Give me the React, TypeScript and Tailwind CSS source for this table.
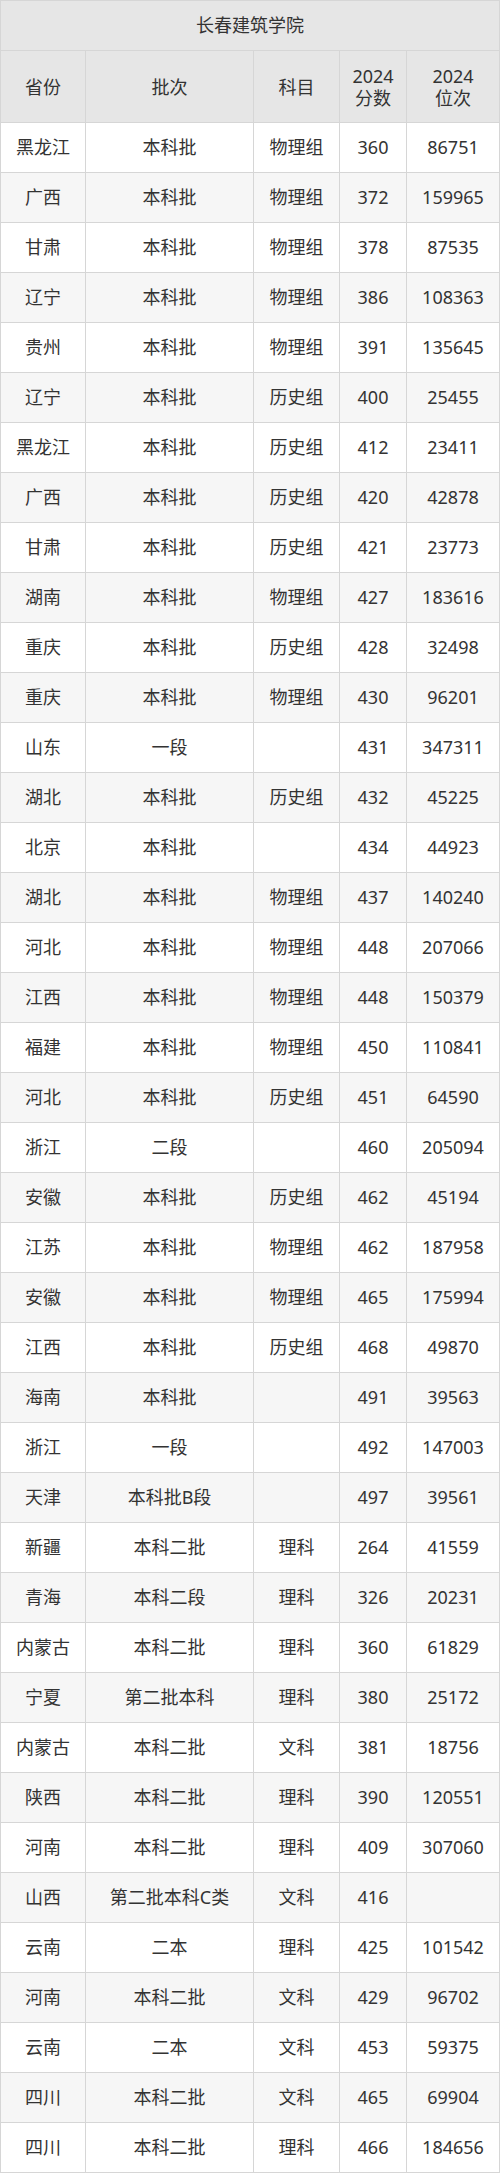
import React from "react";

const rows: [string, string, string, string, string][] = [
  ["黑龙江", "本科批", "物理组", "360", "86751"],
  ["广西", "本科批", "物理组", "372", "159965"],
  ["甘肃", "本科批", "物理组", "378", "87535"],
  ["辽宁", "本科批", "物理组", "386", "108363"],
  ["贵州", "本科批", "物理组", "391", "135645"],
  ["辽宁", "本科批", "历史组", "400", "25455"],
  ["黑龙江", "本科批", "历史组", "412", "23411"],
  ["广西", "本科批", "历史组", "420", "42878"],
  ["甘肃", "本科批", "历史组", "421", "23773"],
  ["湖南", "本科批", "物理组", "427", "183616"],
  ["重庆", "本科批", "历史组", "428", "32498"],
  ["重庆", "本科批", "物理组", "430", "96201"],
  ["山东", "一段", "", "431", "347311"],
  ["湖北", "本科批", "历史组", "432", "45225"],
  ["北京", "本科批", "", "434", "44923"],
  ["湖北", "本科批", "物理组", "437", "140240"],
  ["河北", "本科批", "物理组", "448", "207066"],
  ["江西", "本科批", "物理组", "448", "150379"],
  ["福建", "本科批", "物理组", "450", "110841"],
  ["河北", "本科批", "历史组", "451", "64590"],
  ["浙江", "二段", "", "460", "205094"],
  ["安徽", "本科批", "历史组", "462", "45194"],
  ["江苏", "本科批", "物理组", "462", "187958"],
  ["安徽", "本科批", "物理组", "465", "175994"],
  ["江西", "本科批", "历史组", "468", "49870"],
  ["海南", "本科批", "", "491", "39563"],
  ["浙江", "一段", "", "492", "147003"],
  ["天津", "本科批B段", "", "497", "39561"],
  ["新疆", "本科二批", "理科", "264", "41559"],
  ["青海", "本科二段", "理科", "326", "20231"],
  ["内蒙古", "本科二批", "理科", "360", "61829"],
  ["宁夏", "第二批本科", "理科", "380", "25172"],
  ["内蒙古", "本科二批", "文科", "381", "18756"],
  ["陕西", "本科二批", "理科", "390", "120551"],
  ["河南", "本科二批", "理科", "409", "307060"],
  ["山西", "第二批本科C类", "文科", "416", ""],
  ["云南", "二本", "理科", "425", "101542"],
  ["河南", "本科二批", "文科", "429", "96702"],
  ["云南", "二本", "文科", "453", "59375"],
  ["四川", "本科二批", "文科", "465", "69904"],
  ["四川", "本科二批", "理科", "466", "184656"],
];

const widths = ["w-[85px]", "w-[168px]", "w-[86px]", "w-[67px]", "w-[93px]"];

function Cell({ w, children }: { w: string; children?: React.ReactNode }) {
  return (
    <div className={`${w} shrink-0 flex items-center justify-center text-center border-r border-b border-[#d6d6d6]`}>
      {children}
    </div>
  );
}

export default function App() {
  return (
    <div
      className="w-[500px] bg-white text-[#333] text-[18px] border-l border-t border-[#d6d6d6]"
      style={{ fontFamily: '"Noto Sans", "Noto Sans CJK SC", sans-serif' }}
    >
      <div className="h-[50px] flex items-center justify-center bg-[#e6e6e6] border-r border-b border-[#d6d6d6]">
        长春建筑学院
      </div>
      <div className="h-[72px] flex bg-[#e6e6e6] leading-[22px]">
        <Cell w={widths[0]}>省份</Cell>
        <Cell w={widths[1]}>批次</Cell>
        <Cell w={widths[2]}>科目</Cell>
        <Cell w={widths[3]}>
          <div>
            2024
            <br />
            分数
          </div>
        </Cell>
        <Cell w={widths[4]}>
          <div>
            2024
            <br />
            位次
          </div>
        </Cell>
      </div>
      {rows.map((r, i) => (
        <div key={i} className={`h-[50px] flex ${i % 2 === 1 ? "bg-[#f6f6f6]" : "bg-white"}`}>
          {r.map((c, j) => (
            <Cell key={j} w={widths[j]}>
              {c}
            </Cell>
          ))}
        </div>
      ))}
    </div>
  );
}
